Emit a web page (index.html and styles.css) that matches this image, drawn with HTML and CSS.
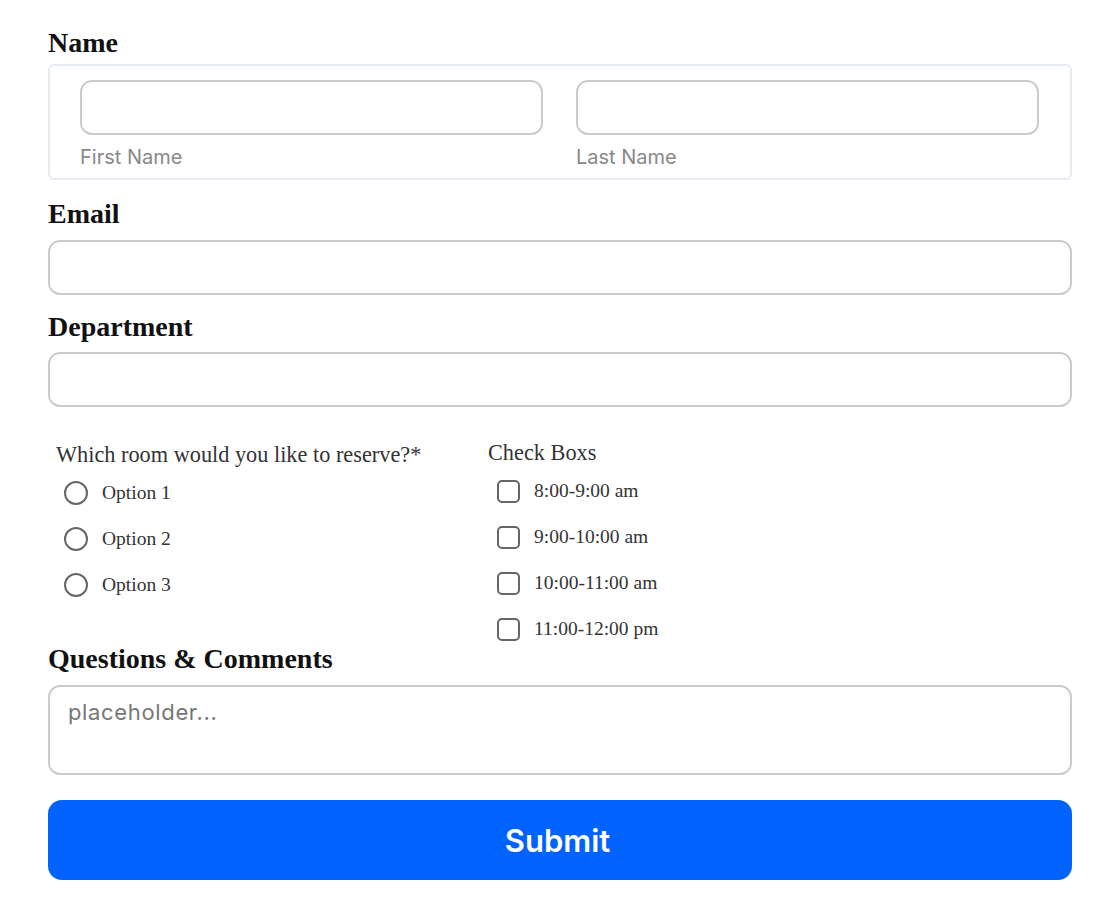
FILE: index.html
```html
<!DOCTYPE html>
<html lang="en">
<head>
<meta charset="utf-8">
<title>Room Reservation</title>
<link rel="stylesheet" href="styles.css">
</head>
<body>
<form class="form">
  <div class="field-label label-name">Name</div>
  <div class="name-box">
    <div class="name-col">
      <input class="text-input" type="text">
      <div class="sub-label">First Name</div>
    </div>
    <div class="name-col">
      <input class="text-input" type="text">
      <div class="sub-label">Last Name</div>
    </div>
  </div>

  <div class="field-label label-email">Email</div>
  <input class="text-input" type="text">

  <div class="field-label label-dept">Department</div>
  <input class="text-input" type="text">

  <div class="choices">
    <div class="choice-col radio-col">
      <div class="choice-heading">Which room would you like to reserve?*</div>
      <div class="choice-list">
        <label class="choice"><span class="radio"></span><span class="choice-text">Option 1</span></label>
        <label class="choice"><span class="radio"></span><span class="choice-text">Option 2</span></label>
        <label class="choice"><span class="radio"></span><span class="choice-text">Option 3</span></label>
      </div>
    </div>
    <div class="choice-col check-col">
      <div class="choice-heading">Check Boxs</div>
      <div class="choice-list">
        <label class="choice"><span class="checkbox"></span><span class="choice-text">8:00-9:00 am</span></label>
        <label class="choice"><span class="checkbox"></span><span class="choice-text">9:00-10:00 am</span></label>
        <label class="choice"><span class="checkbox"></span><span class="choice-text">10:00-11:00 am</span></label>
        <label class="choice"><span class="checkbox"></span><span class="choice-text">11:00-12:00 pm</span></label>
      </div>
    </div>
  </div>

  <div class="field-label label-comments">Questions &amp; Comments</div>
  <textarea class="text-area" placeholder="placeholder..."></textarea>

  <button class="submit" type="button">Submit</button>
</form>
</body>
</html>
```

FILE: styles.css
```css
* { box-sizing: border-box; }

html, body {
  margin: 0;
  padding: 0;
  background: #ffffff;
}

.form {
  width: 1024px;
  margin-left: 48px;
  padding-top: 27px;
  display: flex;
  flex-direction: column;
}

.field-label {
  font-family: "Liberation Serif", "Times New Roman", serif;
  font-weight: bold;
  font-size: 28px;
  line-height: 32px;
  color: #111111;
}

.label-name { margin-bottom: 5px; }
.label-email { margin-top: 18px; margin-bottom: 10px; }
.label-dept { margin-top: 16px; margin-bottom: 9px; }
.label-comments { margin-top: 2px; margin-bottom: 10px; }

.name-box {
  border: 2px solid #e6ebf4;
  border-radius: 6px;
  padding: 14px 31px 10px 30px;
  display: grid;
  grid-template-columns: 1fr 1fr;
  column-gap: 33px;
}

.name-col {
  display: flex;
  flex-direction: column;
}

.text-input {
  display: block;
  width: 100%;
  height: 55px;
  margin: 0;
  border: 2px solid #cccccc;
  border-radius: 12px;
  background: #ffffff;
  outline: none;
  font-family: Inter, "Liberation Sans", sans-serif;
  font-size: 20px;
  padding: 0 16px;
}

.sub-label {
  margin-top: 11px;
  font-family: Inter, "Liberation Sans", sans-serif;
  font-size: 20px;
  line-height: 22px;
  color: #888888;
}

.choices {
  margin-top: 33px;
  display: grid;
  grid-template-columns: 432px 1fr;
}

.choice-col {
  padding-left: 8px;
  display: flex;
  flex-direction: column;
}

.radio-col { padding-top: 2px; }

.choice-heading {
  font-family: "Liberation Serif", "Times New Roman", serif;
  font-size: 22.3px;
  line-height: 26px;
  color: #333333;
}

.choice-list {
  margin-top: 13px;
  display: flex;
  flex-direction: column;
  gap: 22px;
}

.choice {
  display: flex;
  align-items: center;
  height: 24px;
  padding-left: 8px;
}

.check-col .choice { padding-left: 9px; }

.radio {
  width: 24px;
  height: 24px;
  border: 2.5px solid #666666;
  border-radius: 50%;
  flex: none;
}

.checkbox {
  width: 23px;
  height: 23px;
  border: 2.5px solid #666666;
  border-radius: 5px;
  flex: none;
}

.choice-text {
  margin-left: 14px;
  font-family: "Liberation Serif", "Times New Roman", serif;
  font-size: 19.5px;
  color: #333333;
  white-space: nowrap;
}

.text-area {
  display: block;
  width: 100%;
  height: 90px;
  margin: 0;
  border: 2px solid #cccccc;
  border-radius: 12px;
  padding: 12px 18px;
  resize: none;
  outline: none;
  font-family: Inter, "Liberation Sans", sans-serif;
  font-size: 22px;
  line-height: 26px;
  letter-spacing: 0.65px;
  color: #333333;
}

.text-area::placeholder {
  color: #777777;
}

.submit {
  margin-top: 25px;
  width: 100%;
  height: 80px;
  border: none;
  border-radius: 14px;
  background: #0063ff;
  color: #ffffff;
  font-family: Inter, "Liberation Sans", sans-serif;
  font-weight: 600;
  font-size: 31px;
  padding: 0 5px 0 0;
  cursor: pointer;
}
```
